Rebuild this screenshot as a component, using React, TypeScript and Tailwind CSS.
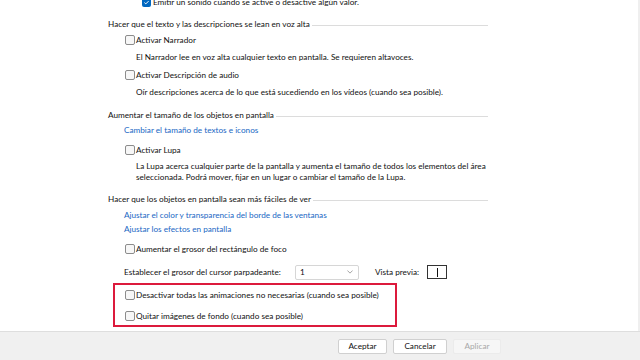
import React from "react";

function Check({ checked = false }: { checked?: boolean }) {
  return checked ? (
    <span className="flex h-[9px] w-[9px] shrink-0 items-center justify-center rounded-[2px] bg-[#0067c0]">
      <svg viewBox="0 0 10 10" className="h-[7px] w-[7px]">
        <path d="M2 5.2 L4 7 L8 3" fill="none" stroke="white" strokeWidth="1.4" />
      </svg>
    </span>
  ) : (
    <span className="block h-[10px] w-[10px] shrink-0 rounded-[2px] border border-[#8c8c8c] bg-[#f7f7f7]" />
  );
}

function CheckRow({ label, className = "" }: { label: string; className?: string }) {
  return (
    <div className={`flex h-[14px] items-center gap-[1px] whitespace-nowrap pl-[125px] ${className}`}>
      <Check />
      <span>{label}</span>
    </div>
  );
}

function Heading({ label, className = "" }: { label: string; className?: string }) {
  return (
    <div className={`flex h-[14px] w-[488px] items-center pl-[108px] ${className}`}>
      <span className="whitespace-nowrap">{label}</span>
      <span className="ml-[2px] mt-[2px] h-px flex-1 bg-[#dcdcdc]" />
    </div>
  );
}

function Desc({ children, className = "" }: { children: React.ReactNode; className?: string }) {
  return (
    <div className={`flex h-[14px] items-center whitespace-nowrap pl-[136px] ${className}`}>{children}</div>
  );
}

function Link({ label, className = "" }: { label: string; className?: string }) {
  return (
    <div className={`flex h-[14px] items-center whitespace-nowrap pl-[124px] text-[#1a67c4] ${className}`}>
      {label}
    </div>
  );
}

export default function App() {
  return (
    <div
      className="flex h-[360px] w-[640px] flex-col overflow-hidden bg-white text-[8.2px] text-[#111]"
      style={{ fontFamily: "Lato, 'Noto Sans', sans-serif" }}
    >
      <div className="flex-1 overflow-hidden border-r-2 border-[#efefef]">
        <div className="-mt-[5px] flex h-[14px] items-center gap-[2px] whitespace-nowrap pl-[142px]">
          <Check checked />
          <span>Emitir un sonido cuando se active o desactive algún valor.</span>
        </div>

        <Heading className="mt-[8px]" label="Hacer que el texto y las descripciones se lean en voz alta" />
        <CheckRow className="mt-[2px]" label="Activar Narrador" />
        <Desc className="mt-[3px]">
          El Narrador lee en voz alta cualquier texto en pantalla. Se requieren altavoces.
        </Desc>
        <CheckRow className="mt-[4px]" label="Activar Descripción de audio" />
        <Desc className="mt-[3px]">
          Oír descripciones acerca de lo que está sucediendo en los vídeos (cuando sea posible).
        </Desc>

        <Heading className="mt-[9px]" label="Aumentar el tamaño de los objetos en pantalla" />
        <Link className="mt-[1px]" label="Cambiar el tamaño de textos e iconos" />
        <CheckRow className="mt-[6px]" label="Activar Lupa" />
        <div className="mt-[4px] whitespace-nowrap pl-[136px] leading-[11px]">
          La Lupa acerca cualquier parte de la pantalla y aumenta el tamaño de todos los elementos del área
          <br />
          seleccionada. Podrá mover, fijar en un lugar o cambiar el tamaño de la Lupa.
        </div>

        <Heading className="mt-[9px]" label="Hacer que los objetos en pantalla sean más fáciles de ver" />
        <Link className="mt-[2px]" label="Ajustar el color y transparencia del borde de las ventanas" />
        <Link label="Ajustar los efectos en pantalla" />
        <CheckRow className="mt-[6px]" label="Aumentar el grosor del rectángulo de foco" />

        <div className="mt-[8px] flex h-[16px] items-center whitespace-nowrap pl-[124px]">
          <span className="w-[171px]">Establecer el grosor del cursor parpadeante:</span>
          <div className="flex h-[15px] w-[64px] items-center justify-between rounded-[2px] border border-[#d6d6d6] bg-white pl-[4px] pr-[5px]">
            <span>1</span>
            <svg viewBox="0 0 8 5" className="h-[4px] w-[6px]">
              <path d="M0.5 0.5 L4 4 L7.5 0.5" fill="none" stroke="#777" strokeWidth="0.9" />
            </svg>
          </div>
          <span className="ml-[16px]">Vista previa:</span>
          <div className="ml-[8px] flex h-[14px] w-[20px] items-center justify-center border border-[#333]">
            <span className="block h-[9px] w-px bg-[#111]" />
          </div>
        </div>

        <div className="ml-[113px] mt-[3px] h-[44px] w-[284px] border-2 border-[#dc1a3c] pt-[3px]">
          <div className="flex h-[14px] items-center gap-[1px] whitespace-nowrap pl-[10px]">
            <Check />
            <span>Desactivar todas las animaciones no necesarias (cuando sea posible)</span>
          </div>
          <div className="mt-[7px] flex h-[14px] items-center gap-[1px] whitespace-nowrap pl-[10px]">
            <Check />
            <span>Quitar imágenes de fondo (cuando sea posible)</span>
          </div>
        </div>
      </div>

      <div className="flex h-[29px] shrink-0 items-center justify-end gap-[6px] border-t border-[#dedede] bg-[#f0f0f0] pr-[139px]">
        <button className="flex h-[15px] w-[49px] items-center justify-center rounded-[2px] border border-[#d0d0d0] bg-white text-[#111]">
          Aceptar
        </button>
        <button className="flex h-[15px] w-[54px] items-center justify-center rounded-[2px] border border-[#d0d0d0] bg-white text-[#111]">
          Cancelar
        </button>
        <button className="flex h-[15px] w-[48px] items-center justify-center rounded-[2px] border border-[#ebebeb] bg-[#f6f6f6] text-[#a8a8a8]">
          Aplicar
        </button>
      </div>
    </div>
  );
}
